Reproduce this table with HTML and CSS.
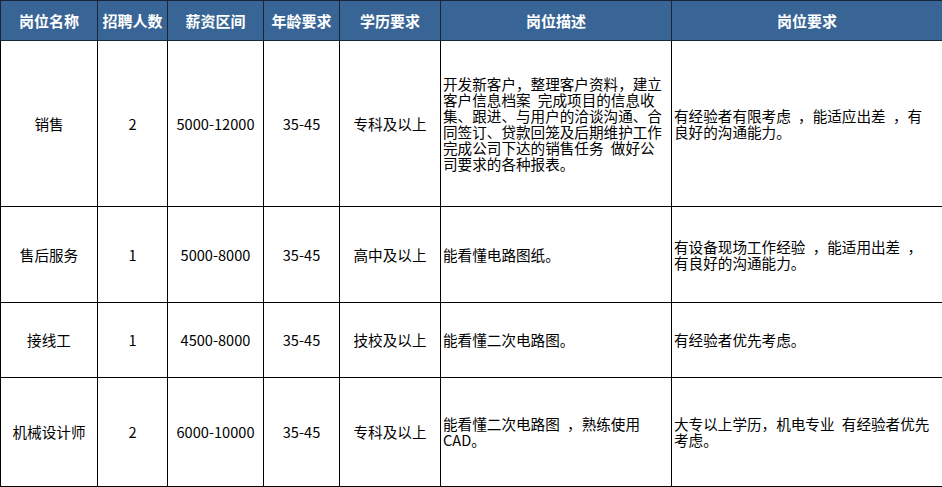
FILE: index.html
```html
<!DOCTYPE html>
<html lang="zh-CN">
<head>
<meta charset="utf-8">
<title>招聘岗位</title>
<link rel="stylesheet" href="styles.css">
</head>
<body>
<table class="jobs">
  <colgroup>
    <col class="c1"><col class="c2"><col class="c3"><col class="c4"><col class="c5"><col class="c6"><col class="c7">
  </colgroup>
  <thead>
    <tr class="head">
      <th>岗位名称</th><th>招聘人数</th><th>薪资区间</th><th>年龄要求</th><th>学历要求</th><th>岗位描述</th><th>岗位要求</th>
    </tr>
  </thead>
  <tbody>
    <tr class="r1">
      <td>销售</td><td>2</td><td>5000-12000</td><td>35-45</td><td>专科及以上</td>
      <td class="txt">开发新客户，整理客户资料，建立<br>客户信息档案&ensp;完成项目的信息收<br>集、跟进、与用户的洽谈沟通、合<br>同签订、贷款回笼及后期维护工作<br>完成公司下达的销售任务&ensp;做好公<br>司要求的各种报表。</td>
      <td class="txt">有经验者有限考虑&ensp;，能适应出差&ensp;，有<br>良好的沟通能力。</td>
    </tr>
    <tr class="r2">
      <td>售后服务</td><td>1</td><td>5000-8000</td><td>35-45</td><td>高中及以上</td>
      <td class="txt">能看懂电路图纸。</td>
      <td class="txt">有设备现场工作经验&ensp;，能适用出差&ensp;，<br>有良好的沟通能力。</td>
    </tr>
    <tr class="r3">
      <td>接线工</td><td>1</td><td>4500-8000</td><td>35-45</td><td>技校及以上</td>
      <td class="txt">能看懂二次电路图。</td>
      <td class="txt">有经验者优先考虑。</td>
    </tr>
    <tr class="r4">
      <td>机械设计师</td><td>2</td><td>6000-10000</td><td>35-45</td><td>专科及以上</td>
      <td class="txt">能看懂二次电路图&ensp;，熟练使用<br>CAD。</td>
      <td class="txt">大专以上学历，机电专业&ensp;有经验者优先<br>考虑。</td>
    </tr>
  </tbody>
</table>
</body>
</html>
```

FILE: styles.css
```css
html, body {
  margin: 0;
  padding: 0;
  background: #ffffff;
}
.jobs {
  border-collapse: collapse;
  table-layout: fixed;
  width: 942px;
  font-family: "Noto Sans CJK SC", "Noto Sans", sans-serif;
  font-size: 14.6px;
  color: #000;
}
.c1 { width: 97px; }
.c2 { width: 70px; }
.c3 { width: 96px; }
.c4 { width: 76px; }
.c5 { width: 101px; }
.c6 { width: 231px; }
.c7 { width: 271px; }
.jobs th, .jobs td {
  border: 1px solid #000;
  padding: 0;
  text-align: center;
  vertical-align: middle;
  white-space: nowrap;
  overflow: hidden;
}
.jobs th {
  background: #386595;
  color: #fff;
  font-weight: bold;
  font-size: 15px;
  border-color: #17273a;
}
.head { height: 40px; }
.r1 { height: 166px; }
.r2 { height: 96px; }
.r3 { height: 75px; }
.r4 { height: 109px; }
.jobs td {
  line-height: 16px;
}
.jobs td.txt {
  text-align: left;
  padding-left: 2px;
  line-height: 16px;
}
```
